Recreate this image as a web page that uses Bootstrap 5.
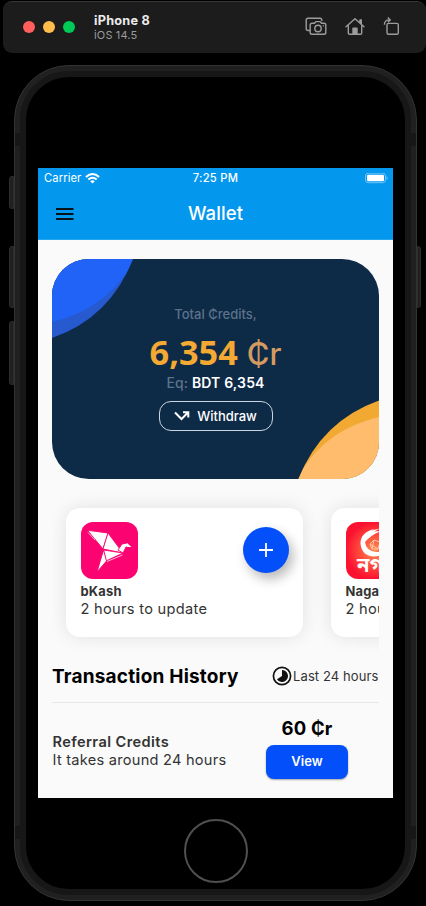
<!DOCTYPE html>
<html lang="en">
<head>
<meta charset="utf-8">
<meta name="viewport" content="width=device-width, initial-scale=1">
<title>Wallet</title>
<link href="https://cdn.jsdelivr.net/npm/bootstrap@5.3.0/dist/css/bootstrap.min.css" rel="stylesheet">
<style>
body{width:426px;height:906px;background:#000;font-family:Inter,"Liberation Sans",sans-serif;overflow:hidden}
svg{display:block;flex:none}
.t{white-space:nowrap;line-height:1}
.winbar{margin:1px 0 0 3px;height:52px;background:#1c1c1c;border-top:1px solid #363636;border-radius:9px;padding:0 25px 0 20px}
.dots{margin-bottom:1px}
.dot{width:12px;height:12px;border-radius:50%}
.dot-red{background:#ff5f5c}.dot-amber{background:#ffbd4c}.dot-green{background:#00ca56}
.win-title{margin:1px 0 0 19px}
.win-name{font-size:12.7px;font-weight:700;color:#ececec;margin-bottom:2.5px;letter-spacing:.25px}
.win-os{font-size:11px;color:#9b9b9b;letter-spacing:.15px}
.win-tools{gap:18px;margin-bottom:2px}
.device{margin:12px 0 0 14px;width:403px;height:836px;border:1px solid #333;border-radius:55px;background:#202020;padding:5px}
.bezel{height:100%;border:6px solid #171717;border-radius:49px;background:#000;padding:91px 12px 0}
.side{position:absolute;background:#202020;border:1px solid #2d2d2d}
.side-l{left:-6px;width:5px;border-radius:3px 0 0 3px}
.side-r{right:-5px;width:4px;border-radius:0 3px 3px 0}
.mute{top:110px;height:33px}.upper{top:180px;height:62px}.lower{top:255px;height:64px}
.band{position:absolute;width:6px;height:13px;background:#171717}
.band-top{top:67px}.band-bottom{top:760px}
.screen{width:355px;height:630px;background:#fafafa;overflow:hidden}
.appbar{height:72px;background:#0397ee;color:#fff;border-bottom:1px solid #26a5f1}
.status{height:20px;padding:0 5px 0 6px;font-size:11.2px}
.status .t{padding-top:1px}
.carrier{letter-spacing:.1px}
.clock{font-weight:500;letter-spacing:.3px}
.toolbar{height:51px;padding-left:18px}
.page-title{font-size:18.5px;font-weight:500;letter-spacing:.1px}
.balance{margin:18.5px 14px 0;height:220.5px;border-radius:37px;background:#0d2a47;overflow:hidden}
.balance-body{padding-top:49px}
.caption-muted{font-size:13px;font-weight:500;color:#5c728a}
.amount-row{margin-top:14.5px;gap:9px}
.amount{font-family:"Open Sans",sans-serif;font-size:34.3px;font-weight:700;color:#f3a933}
.unit{font-size:31px;font-weight:500;color:#d49b61}
.equiv{font-size:14px;font-weight:600;color:#fff;margin-top:7px;letter-spacing:.15px}
.equiv span{color:#5c728a;font-weight:500}
.withdraw{width:114px;height:30.5px;border:1px solid #cfd5dc;border-radius:12px;color:#fff;gap:7px;margin-top:10.5px;font-size:13px;font-weight:500}
.rail{margin:0 14px;padding:28.5px 0 34px 14px;height:176px;gap:28px;overflow:hidden}
.provider{width:237px;height:129px;flex:none;border-radius:14px;background:#fff;box-shadow:0 0 18px rgba(0,0,0,.1);padding:14px 14px 14px 14.5px}
.logo{border-radius:12px;overflow:hidden;width:57px;height:57px}
.plus{width:46px;height:46px;background:#0350fb;box-shadow:4px 6px 12px rgba(0,0,0,.28);margin-top:5.5px}
.ink{color:#333}
.p-name{font-size:12.9px;font-weight:700;margin-top:7px;letter-spacing:.2px}
.p-note{font-size:14.6px;margin-top:3.5px;letter-spacing:.3px}
.history{margin:0 14px;height:47.500px;padding-top:12px;border-bottom:1px solid #e8e8e8}
.h-title{font-size:19px;font-weight:700;letter-spacing:.2px}
.h-range{gap:1px;font-size:13px;margin:-1px .5px 0 0;letter-spacing:.1px}
.entry{margin:0 14px 0 14.5px}
.e-left{padding-top:32.5px}
.e-name{font-size:14.6px;font-weight:600;letter-spacing:.4px}
.e-note{font-size:14.6px;margin-top:3.5px;letter-spacing:.25px}
.e-right{padding:16px 31px 0 0}
.e-sum{font-size:18.5px;font-weight:700;margin-bottom:7.5px;letter-spacing:.2px}
.view{width:82px;height:34px;border-radius:8px;background:#0350fb;color:#fff;box-shadow:0 1px 2px rgba(0,0,0,.35);font-size:13px;font-weight:600}
.home{width:64px;height:64px;border:2px solid #505050;border-radius:50%;margin:21px auto 0}
</style>
<script src="https://cdn.jsdelivr.net/npm/bootstrap@5.3.0/dist/js/bootstrap.bundle.min.js"></script>
</head>
<body>
<header class="winbar d-flex align-items-center">
  <div class="dots d-flex gap-2">
    <span class="dot dot-red"></span><span class="dot dot-amber"></span><span class="dot dot-green"></span>
  </div>
  <div class="win-title">
    <div class="t win-name">iPhone 8</div>
    <div class="t win-os">iOS 14.5</div>
  </div>
  <div class="win-tools d-flex ms-auto">
    <svg width="22" height="19" viewBox="0 0 22 19" fill="none" stroke="#9c9c9c" stroke-width="1.4" stroke-linejoin="round"><path d="M5 13.500H3Q1.200 13.500 1.200 11.700V3Q1.200 1.200 3 1.200H15Q16.800 1.200 16.800 3V4"/><path d="M7 6.200H9.500L10.800 4.600H15.200L16.500 6.200H19Q20.800 6.200 20.800 8V15.500Q20.800 17.300 19 17.300H7Q5.200 17.300 5.200 15.500V8Q5.200 6.200 7 6.200Z"/><circle cx="13" cy="11.500" r="3.200"/><path d="M17.800 8.800H18.800"/></svg>
    <svg width="20" height="19" viewBox="0 0 20 19" fill="none" stroke="#9c9c9c" stroke-width="1.4" stroke-linejoin="round" stroke-linecap="round"><path d="M1 9.700L10 1.800L19 9.700M3.300 8.500V16Q3.300 17.300 4.600 17.300H15.400Q16.700 17.300 16.700 16V8.500M16.300 6.800V3H15V5.500"/><path d="M8 17V11.300H12V17Z" fill="#9c9c9c"/></svg>
    <svg width="18" height="19" viewBox="0 0 18 19" fill="none" stroke="#9c9c9c" stroke-width="1.4" stroke-linejoin="round"><rect x="4" y="6.400" width="11.300" height="10.800" rx="1.500"/><path d="M1.400 7.800Q1.400 2.900 6.300 2.900M4.800 .6L7.300 2.900L4.800 5.200"/></svg>
  </div>
</header>

<main class="device position-relative">
  <i class="side side-l mute"></i>
  <i class="side side-l upper"></i>
  <i class="side side-l lower"></i>
  <i class="side side-r upper"></i>
  <i class="band band-top start-0"></i><i class="band band-top end-0"></i>
  <i class="band band-bottom start-0"></i><i class="band band-bottom end-0"></i>
  <div class="bezel">
    <div class="screen">
      <div class="appbar">
        <div class="status d-flex align-items-center position-relative">
          <span class="t carrier">Carrier</span>
          <svg width="15" height="11" viewBox="0 0 15 11" class="ms-1" fill="none" stroke="#fff" stroke-width="2"><path d="M.9 4.100Q7.500-2 14.100 4.100M3.300 6.600Q7.500 2.900 11.700 6.600"/><path d="M5.200 8.200Q7.500 6.400 9.800 8.200L7.500 10.600Z" fill="#fff" stroke="none"/></svg>
          <span class="t clock position-absolute start-50 translate-middle-x">7:25 PM</span>
          <svg class="ms-auto" width="23" height="11" viewBox="0 0 23 11"><rect x=".5" y=".2" width="20" height="9.500" rx="2.800" fill="none" stroke="#73c5f5"/><rect x="2" y="1.700" width="17" height="6.500" rx="1.300" fill="#fff"/><path d="M22 3.500V6.500" stroke="#73c5f5"/></svg>
        </div>
        <div class="toolbar d-flex align-items-center position-relative">
          <svg width="18" height="12" viewBox="0 0 18 12" stroke="#06121c" stroke-width="2"><path d="M0 1H17.500M0 6H17.500M0 11H17.500"/></svg>
          <span class="t page-title position-absolute start-50 translate-middle-x">Wallet</span>
        </div>
      </div>

      <section class="balance position-relative">
        <svg class="position-absolute top-0 start-0" width="327" height="221" viewBox="0 0 327 221"><path d="M0 0H81Q58 59 0 79Z" fill="#2759cf"/><path d="M0 0H81L76 11Q51 51 0 63Z" fill="#2163f6"/><path d="M327 221H246Q269 162 327 141.500Z" fill="#f2a932"/><path d="M327 221H246L251 210Q276 170 327 158Z" fill="#ffbc6c"/></svg>
        <div class="balance-body position-relative d-flex flex-column align-items-center">
          <div class="t caption-muted">Total ₵redits,</div>
          <div class="amount-row d-flex align-items-baseline">
            <span class="t amount">6,354</span>
            <span class="t unit">₵r</span>
          </div>
          <div class="t equiv"><span>Eq:</span> BDT 6,354</div>
          <div class="withdraw d-flex align-items-center justify-content-center">
            <svg width="16" height="10" viewBox="0 0 16 10" fill="none" stroke="#fff" stroke-width="2"><path d="M1 1.500L7.500 8L14 1.500M9 1.200H14.300V6.500"/></svg>
            <span class="t">Withdraw</span>
          </div>
        </div>
      </section>

      <section class="rail d-flex">
        <div class="provider">
          <div class="d-flex justify-content-between">
            <svg class="logo" viewBox="0 0 57 57"><rect width="57" height="57" fill="#fb0371"/><g fill="#fff" stroke="#fb0371" stroke-width=".9"><path d="M6.500 8.300L27 11L22 27Z"/><path d="M27 11L42 31L22 27Z"/><path d="M22.500 28L42 31L25 39Z"/><path d="M22.500 28L25.500 39L16 50Z"/><path d="M37 28L41 22L46 21L50 25H45L42 31Z"/></g><path d="M46 21L50.500 25H46Z" fill="#fff"/><path d="M26 39.500L41.500 33M7 10.500L14 18" stroke="#fff" stroke-width=".7"/></svg>
            <div class="plus rounded-circle d-flex align-items-center justify-content-center"><svg width="14" height="14" viewBox="0 0 14 14"><path d="M7 0V14M0 7H14" stroke="#fff" stroke-width="1.800"/></svg></div>
          </div>
          <div class="t ink p-name">bKash</div>
          <div class="t ink p-note">2 hours to update</div>
        </div>
        <div class="provider">
          <svg class="logo" viewBox="0 0 57 57"><defs><radialGradient id="ng"><stop offset="0" stop-color="#ff8a50"/><stop offset=".55" stop-color="#ff4a3c"/><stop offset="1" stop-color="#fb1231"/></radialGradient></defs><rect width="57" height="57" fill="url(#ng)"/><path d="M28 7Q14 11 14.500 22Q16 34 28 34.500Q40 34 42 23Q38 30 30 30Q20 29 19 20Q20 13 28 7Z" fill="#fff"/><path d="M16 17Q21 8 34 6.500L28 9.500L38 8.500Q27 11 19 20Z" fill="#fff"/><path d="M24 22L28 18L34 20L32 27L26 27ZM24 22L32 27M28 18L26 27" fill="none" stroke="#ffd0b0" stroke-width=".9"/><text x="11" y="50" fill="#fff" font-size="20" font-weight="700" font-family="Noto Sans Bengali,FreeSans,sans-serif">নগদ</text></svg>
          <div class="t ink p-name">Nagad</div>
          <div class="t ink p-note">2 hours to update</div>
        </div>
      </section>

      <section class="history d-flex align-items-start justify-content-between">
        <div class="t text-black h-title">Transaction History</div>
        <div class="h-range d-flex align-items-center ink">
          <svg width="20" height="20" viewBox="0 0 20 20"><circle cx="10" cy="10" r="8.600" fill="none" stroke="#111" stroke-width="1.700"/><path d="M10 4A6 6 0 1 1 5 13.300L10 10Z" fill="#111"/></svg>
          <span class="t">Last 24 hours</span>
        </div>
      </section>

      <section class="entry d-flex justify-content-between">
        <div class="e-left">
          <div class="t ink e-name">Referral Credits</div>
          <div class="t ink e-note">It takes around 24 hours</div>
        </div>
        <div class="e-right d-flex flex-column align-items-center">
          <div class="t text-black e-sum">60 ₵r</div>
          <button class="view t border-0 p-0">View</button>
        </div>
      </section>
    </div>
    <div class="home"></div>
  </div>
</main>
</body>
</html>
